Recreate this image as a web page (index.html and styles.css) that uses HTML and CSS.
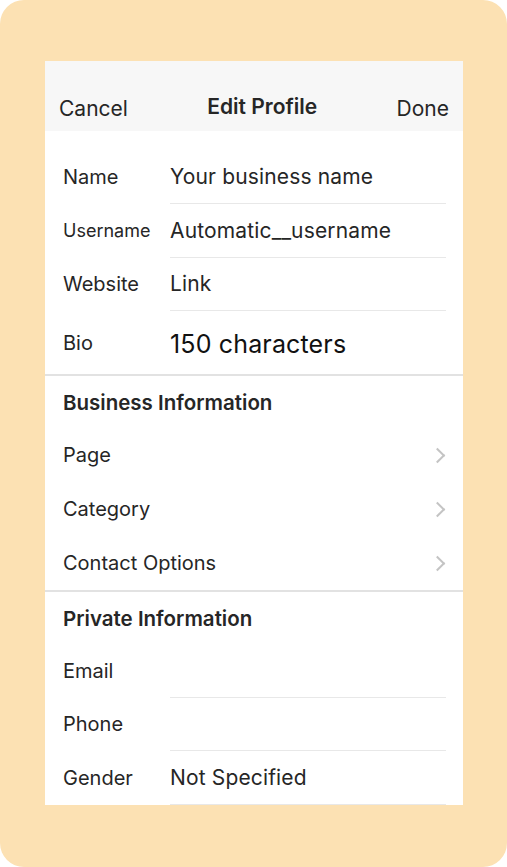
FILE: index.html
```html
<!DOCTYPE html>
<html lang="en">
<head>
  <meta charset="UTF-8">
  <meta name="viewport" content="width=device-width, initial-scale=1.0">
  <title>Edit Profile</title>
  <link rel="stylesheet" href="styles.css">
</head>
<body>
  <div class="frame">
    <div class="card">
      <!-- Top bar -->
      <div class="topbar">
        <span class="nav-btn">Cancel</span>
        <span class="title">Edit Profile</span>
        <span class="nav-btn">Done</span>
      </div>

      <!-- Public fields -->
      <div class="section first">
        <div class="row">
          <div class="label">Name</div>
          <div class="value">Your business name</div>
        </div>
        <div class="row">
          <div class="label small">Username</div>
          <div class="value">Automatic__username</div>
        </div>
        <div class="row">
          <div class="label">Website</div>
          <div class="value">Link</div>
        </div>
        <div class="row bio">
          <div class="label">Bio</div>
          <div class="value big">150 characters</div>
        </div>
      </div>

      <!-- Business info -->
      <div class="section">
        <div class="heading">Business Information</div>
        <div class="link-row"><span>Page</span><span class="chevron"></span></div>
        <div class="link-row"><span>Category</span><span class="chevron"></span></div>
        <div class="link-row"><span>Contact Options</span><span class="chevron"></span></div>
      </div>

      <!-- Private info -->
      <div class="section">
        <div class="heading">Private Information</div>
        <div class="row">
          <div class="label">Email</div>
          <div class="value"></div>
        </div>
        <div class="row">
          <div class="label">Phone</div>
          <div class="value"></div>
        </div>
        <div class="row">
          <div class="label">Gender</div>
          <div class="value">Not Specified</div>
        </div>
      </div>
    </div>
  </div>
</body>
</html>
```

FILE: styles.css
```css
body {
  margin: 0;
  background: #fff;
  font-family: Inter, "Noto Sans", sans-serif;
  color: #262626;
}
.frame {
  height: 867px;
  box-sizing: border-box;
  padding: 61px 44px 0 45px;
  background: #fce1b3;
  border-radius: 24px;
}
.card {
  background: #fff;
}
.topbar {
  height: 70px;
  box-sizing: border-box;
  display: flex;
  justify-content: space-between;
  align-items: flex-end;
  padding: 0 14px 10px 14px;
  background: #f7f7f7;
}
.nav-btn {
  font-size: 21px;
}
.title {
  font-size: 21px;
  font-weight: 600;
  padding-bottom: 2px;
}
.section {
  border-top: 2px solid #e2e2e2;
}
.section.first {
  border-top: none;
  padding-top: 19.5px;
}
.row {
  display: flex;
  height: 53.5px;
  box-sizing: border-box;
  padding-left: 18px;
}
.row.bio {
  height: 63px;
}
.label {
  width: 107px;
  display: flex;
  align-items: center;
  font-size: 20px;
}
.label.small {
  font-size: 18px;
}
.value {
  flex: 1;
  display: flex;
  align-items: center;
  margin-right: 17px;
  border-bottom: 1px solid #e8e8e8;
  font-size: 21px;
  letter-spacing: 0.15px;
}
.bio .value {
  border-bottom: none;
}
.value.big {
  font-size: 25px;
  color: #111;
  padding-top: 3px;
}
.heading {
  height: 52px;
  display: flex;
  align-items: center;
  padding-left: 18px;
  font-size: 20.5px;
  font-weight: 600;
}
.link-row {
  height: 54px;
  display: flex;
  align-items: center;
  justify-content: space-between;
  padding: 0 20px 0 18px;
  font-size: 20px;
}
.chevron {
  width: 9px;
  height: 9px;
  border-top: 2px solid #c4c4c4;
  border-right: 2px solid #c4c4c4;
  transform: rotate(45deg);
}
```
